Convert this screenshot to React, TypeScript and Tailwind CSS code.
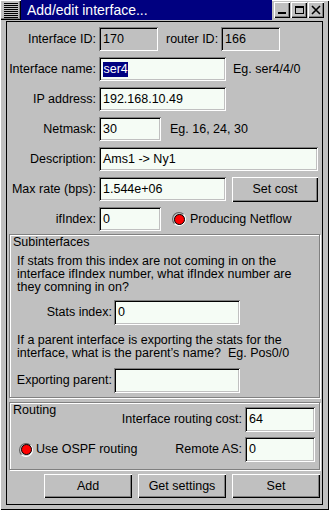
import React from 'react'

const sunken =
  'shadow-[inset_1px_1px_0_#808080,inset_-1px_-1px_0_#fff,inset_2px_2px_0_#000,inset_-2px_-2px_0_#c0c0c0]'
const raised =
  'shadow-[inset_1px_1px_0_#fff,inset_-1px_-1px_0_#000,inset_-2px_-2px_0_#808080]'
const etched = 'border border-[#808080] shadow-[inset_1px_1px_0_#fff,1px_1px_0_#fff]'

function Field({ w, value, gray, h = 'h-[24px]' }: { w: string; value?: React.ReactNode; gray?: boolean; h?: string }) {
  return (
    <div
      className={`${w} ${h} ${sunken} ${gray ? 'bg-[#c0c0c0]' : 'bg-[#f5fcf5]'} flex items-center pl-[4px] whitespace-nowrap overflow-hidden`}
    >
      {value}
    </div>
  )
}

function Btn({ w, h, children }: { w: string; h: string; children: React.ReactNode }) {
  return (
    <div className={`${w} ${h} ${raised} bg-[#c0c0c0] flex items-center justify-center`}>{children}</div>
  )
}

function Radio() {
  return (
    <span className="w-[14px] h-[14px] rounded-full border border-t-[#606060] border-l-[#606060] border-b-white border-r-white flex items-center justify-center">
      <span className="w-[11px] h-[11px] rounded-full bg-[#ff0000] border border-black" />
    </span>
  )
}

function Row({ label, children }: { label: string; children: React.ReactNode }) {
  return (
    <div className="flex items-center h-[24px]">
      <div className="w-[92px] text-right pr-[3px] whitespace-nowrap">{label}</div>
      {children}
    </div>
  )
}

function TitleButton({ children }: { children: React.ReactNode }) {
  return (
    <div className={`w-[16px] h-[16px] ${raised} bg-[#c0c0c0] flex items-center justify-center`}>
      {children}
    </div>
  )
}

export default function App() {
  return (
    <div className="w-[329px] h-[510px] bg-[#c0c0c0] text-black text-[12.5px] font-['Liberation_Sans',Arial,sans-serif] shadow-[inset_1px_1px_0_#fff,inset_-1px_-1px_0_#000] overflow-hidden">
      {/* Title bar */}
      <div className="flex h-[20px]">
        <div className={`w-[21px] h-[20px] ${raised} flex items-center justify-center`}>
          <svg width="14" height="15" viewBox="0 0 14 15">
            {[0, 2, 4, 6, 8, 10, 12, 14].map(y => (
              <rect key={y} x="0" y={y} width="14" height="1" fill="#000" />
            ))}
          </svg>
        </div>
        <div className="flex-1 bg-[#000080] text-white text-[14px] leading-[20px] pl-[6px]">
          Add/edit interface...
        </div>
        <div className="w-[57px] flex items-center gap-[1px] pl-[2px]">
          <TitleButton>
            <svg width="10" height="10" viewBox="0 0 10 10">
              <rect x="1" y="7" width="8" height="2" fill="#000" />
            </svg>
          </TitleButton>
          <TitleButton>
            <svg width="10" height="10" viewBox="0 0 10 10">
              <rect x="1.5" y="1.5" width="8" height="7" fill="none" stroke="#000" />
              <rect x="1" y="1" width="9" height="2" fill="#000" />
            </svg>
          </TitleButton>
          <TitleButton>
            <svg width="10" height="10" viewBox="0 0 10 10">
              <path d="M1 1 L9 9 M9 1 L1 9" stroke="#000" strokeWidth="1.6" />
            </svg>
          </TitleButton>
        </div>
      </div>

      {/* Body */}
      <div className="mx-[6px] mt-[1px] h-[484px] border border-black flex flex-col">
        <div className="pt-[5px] flex flex-col gap-[6px]">
          <Row label="Interface ID:">
            <Field w="w-[59px]" value="170" gray />
            <div className="ml-[8px] mr-[3px] whitespace-nowrap">router ID:</div>
            <Field w="w-[59px]" value="166" gray />
          </Row>
          <Row label="Interface name:">
            <Field
              w="w-[127px]"
              value={<span className="bg-[#000080] text-white leading-[15px] px-[0.5px]">ser4</span>}
            />
            <div className="ml-[7px]">Eg. ser4/4/0</div>
          </Row>
          <Row label="IP address:">
            <Field w="w-[127px]" value="192.168.10.49" />
          </Row>
          <Row label="Netmask:">
            <Field w="w-[62px]" value="30" />
            <div className="ml-[9px]">Eg. 16, 24, 30</div>
          </Row>
          <Row label="Description:">
            <Field w="w-[219px]" value="Ams1 -> Ny1" />
          </Row>
          <Row label="Max rate (bps):">
            <Field w="w-[127px]" value="1.544e+06" />
            <div className="ml-[6px]">
              <Btn w="w-[86px]" h="h-[25px]">Set cost</Btn>
            </div>
          </Row>
          <Row label="ifIndex:">
            <Field w="w-[62px]" value="0" />
            <div className="ml-[11px] flex items-center gap-[4px]">
              <Radio />
              <span>Producing Netflow</span>
            </div>
          </Row>
        </div>

        {/* Subinterfaces */}
        <div className={`mx-[2px] mt-[3px] ${etched} pb-[4px]`}>
          <div className="pl-[3px] leading-[15px]">Subinterfaces</div>
          <p className="mt-[5px] pl-[7px] leading-[13px] whitespace-nowrap">
            If stats from this index are not coming in on the
            <br />
            interface ifIndex number, what ifIndex number are
            <br />
            they comning in on?
          </p>
          <div className="mt-[6px] flex items-center h-[25px]">
            <div className="w-[104px] text-right pr-[2px]">Stats index:</div>
            <Field w="w-[126px]" h="h-[25px]" value="0" />
          </div>
          <p className="mt-[9px] pl-[7px] leading-[13px] whitespace-nowrap">
            If a parent interface is exporting the stats for the
            <br />
            interface, what is the parent’s name?&nbsp; Eg. Pos0/0
          </p>
          <div className="mt-[8px] flex items-center h-[25px]">
            <div className="w-[104px] text-right pr-[2px] whitespace-nowrap">Exporting parent:</div>
            <Field w="w-[126px]" h="h-[25px]" value="" />
          </div>
        </div>

        {/* Routing */}
        <div className={`mx-[2px] mt-[4px] ${etched} pb-[7px]`}>
          <div className="flex justify-between items-start">
            <div className="pl-[3px] leading-[15px]">Routing</div>
            <div className="mt-[4px] flex items-center pr-[4px]">
              <div className="pr-[3px] whitespace-nowrap">Interface routing cost:</div>
              <Field w="w-[70px]" h="h-[25px]" value="64" />
            </div>
          </div>
          <div className="mt-[5px] flex justify-between items-center">
            <div className="pl-[9px] flex items-center gap-[3px]">
              <Radio />
              <span>Use OSPF routing</span>
            </div>
            <div className="flex items-center pr-[4px]">
              <div className="pr-[3px]">Remote AS:</div>
              <Field w="w-[70px]" h="h-[25px]" value="0" />
            </div>
          </div>
        </div>

        {/* Buttons */}
        <div className="mt-[4px] flex justify-end gap-[6px] pr-[2px]">
          <Btn w="w-[88px]" h="h-[24px]">Add</Btn>
          <Btn w="w-[88px]" h="h-[24px]">Get settings</Btn>
          <Btn w="w-[88px]" h="h-[24px]">Set</Btn>
        </div>
      </div>
    </div>
  )
}
